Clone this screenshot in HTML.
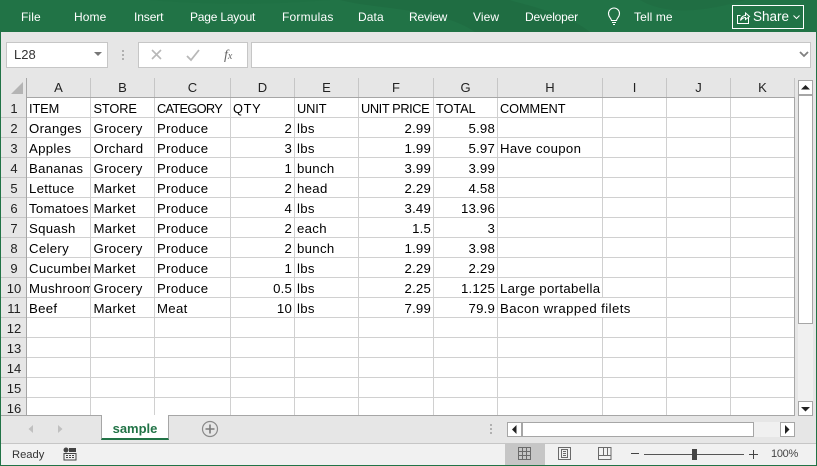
<!DOCTYPE html>
<html>
<head>
<meta charset="utf-8">
<style>
*{box-sizing:border-box}
html,body{margin:0;padding:0}
body{width:817px;height:466px;position:relative;overflow:hidden;background:#e6e6e6;font-family:"Liberation Sans",sans-serif;color:#000}
.a{position:absolute}
.t{position:absolute;top:9px;height:16px;line-height:16px;color:#fff;font-size:12px;letter-spacing:.1px;white-space:nowrap}
table{position:absolute;left:27px;top:98px;border-collapse:separate;border-spacing:0;table-layout:fixed;width:767px;background:#fff}
td{height:20px;padding:2px 2px 0;border-right:1px solid #d0d0d0;border-bottom:1px solid #d0d0d0;font-size:13.2px;letter-spacing:.32px;line-height:17px;white-space:nowrap;overflow:hidden;color:#000}
td:nth-child(2){padding-left:2.500px}
td.r{text-align:right;letter-spacing:.2px;padding-right:2px}
tr.h td{font-size:12.8px;letter-spacing:-.1px}
.ch{position:absolute;top:78px;height:19px;border-right:1px solid #c6c6c6;text-align:center;font-size:13px;line-height:20px;color:#222}
.rh{position:absolute;left:1px;width:25px;height:20px;border-bottom:1px solid #c6c6c6;text-align:center;font-size:13px;line-height:21px;padding-left:1px;color:#222}
</style>
</head>
<body>
<!-- frame -->
<div class="a" style="left:0;top:0;width:817px;height:32px;background:#217346"></div>
<svg class="a" style="left:0;top:0" width="817" height="32"><path d="M340 0C380 10 440 8 475 32L590 32C565 12 520 4 510 0Z" fill="#1f6b41" opacity=".75"/><path d="M640 0C660 12 690 14 730 4L745 0Z" fill="#1f6b41" opacity=".6"/><path d="M150 0C220 6 280 4 330 0Z" fill="#1f6e42" opacity=".4"/></svg>
<div class="t" style="left:21px">File</div>
<div class="t" style="left:74px">Home</div>
<div class="t" style="left:134px;letter-spacing:-.1px">Insert</div>
<div class="t" style="left:190px;letter-spacing:-.2px">Page Layout</div>
<div class="t" style="left:282px;letter-spacing:.2px">Formulas</div>
<div class="t" style="left:358px">Data</div>
<div class="t" style="left:409px;letter-spacing:-.2px">Review</div>
<div class="t" style="left:473px">View</div>
<div class="t" style="left:525px;letter-spacing:-.2px">Developer</div>
<div class="t" style="left:634px">Tell me</div>
<svg class="a" style="left:606px;top:7px" width="16" height="20" fill="none" stroke="#fff" stroke-width="1.1"><path d="M5.500 13.500C5 11 2.500 10 2.500 6.500A5.300 5.300 0 0 1 13.500 6.500C13.500 10 11 11 10.500 13.500Z"/><path d="M6 15.500H10M7 17.500H9"/></svg>
<div class="a" style="left:732px;top:5px;width:72px;height:24px;border:1px solid #fff"></div>
<svg class="a" style="left:736px;top:10px" width="15" height="15" fill="none" stroke="#fff" stroke-width="1"><path d="M4.500 5.500H1.500V13.500H12.500V7.500"/><path d="M4.500 10.500C5 7 7.500 5.500 9.500 5.500V3L13.500 6.500L9.500 9.500V7.500C7.500 7.500 6 8.500 4.500 10.500Z"/></svg>
<div class="t" style="left:753px;top:9px;font-size:13.5px;letter-spacing:0">Share</div>
<svg class="a" style="left:793px;top:15px" width="7" height="5" fill="none" stroke="#fff" stroke-width="1"><path d="M.5 .5L3.500 3.500L6.500 .5"/></svg>

<!-- formula bar -->
<div class="a" style="left:6px;top:42px;width:102px;height:26px;background:#fff;border:1px solid #c6c6c6"></div>
<div class="a" style="left:14px;top:47px;font-size:13px;line-height:16px;color:#333">L28</div>
<svg class="a" style="left:93px;top:51px" width="10" height="6"><path d="M1 1H9L5 5Z" fill="#777"/></svg>
<div class="a" style="left:122px;top:50px;width:2px;height:2px;background:#b0b0b0;box-shadow:0 4px 0 #b0b0b0,0 8px 0 #b0b0b0"></div>
<div class="a" style="left:138px;top:42px;width:110px;height:26px;background:#fff;border:1px solid #c6c6c6"></div>
<svg class="a" style="left:150px;top:47px" width="90" height="16" fill="none"><path d="M2 3L11 12M11 3L2 12" stroke="#b8b8b8" stroke-width="1.6"/><path d="M37 9L41 13L49 3" stroke="#b8b8b8" stroke-width="1.8"/><text x="74" y="12" font-family="Liberation Serif,serif" font-style="italic" font-size="14" fill="#666">f<tspan font-size="10">x</tspan></text></svg>
<div class="a" style="left:251px;top:42px;width:560px;height:26px;background:#fff;border:1px solid #c6c6c6"></div>
<svg class="a" style="left:799px;top:51px" width="10" height="7" fill="none"><path d="M1 1L5 5L9 1" stroke="#808080" stroke-width="1.8"/></svg>

<!-- column headers -->
<div class="a" style="left:1px;top:78px;width:794px;height:19px;background:#e6e6e6"></div>
<div class="a" style="left:26px;top:78px;width:1px;height:337px;background:#a6a6a6"></div>
<svg class="a" style="left:11px;top:82px" width="13" height="13"><path d="M12 0V12H0Z" fill="#b4b4b4"/></svg>
<div class="ch" style="left:27px;width:64px">A</div>
<div class="ch" style="left:91px;width:64px">B</div>
<div class="ch" style="left:155px;width:76px">C</div>
<div class="ch" style="left:231px;width:64px">D</div>
<div class="ch" style="left:295px;width:64px">E</div>
<div class="ch" style="left:359px;width:75px">F</div>
<div class="ch" style="left:434px;width:64px">G</div>
<div class="ch" style="left:498px;width:105px">H</div>
<div class="ch" style="left:603px;width:64px">I</div>
<div class="ch" style="left:667px;width:64px">J</div>
<div class="ch" style="left:731px;width:64px">K</div>
<div class="a" style="left:26px;top:97px;width:769px;height:1px;background:#a6a6a6"></div>

<!-- row headers -->
<div class="rh" style="top:98px">1</div>
<div class="rh" style="top:118px">2</div>
<div class="rh" style="top:138px">3</div>
<div class="rh" style="top:158px">4</div>
<div class="rh" style="top:178px">5</div>
<div class="rh" style="top:198px">6</div>
<div class="rh" style="top:218px">7</div>
<div class="rh" style="top:238px">8</div>
<div class="rh" style="top:258px">9</div>
<div class="rh" style="top:278px">10</div>
<div class="rh" style="top:298px">11</div>
<div class="rh" style="top:318px">12</div>
<div class="rh" style="top:338px">13</div>
<div class="rh" style="top:358px">14</div>
<div class="rh" style="top:378px">15</div>
<div class="rh" style="top:398px;height:17px;border-bottom:0">16</div>

<!-- grid -->
<div class="a" style="left:27px;top:98px;width:767px;height:317px;overflow:hidden;background:#fff">
<table style="left:0;top:0">
<colgroup><col style="width:64px"><col style="width:64px"><col style="width:76px"><col style="width:64px"><col style="width:64px"><col style="width:75px"><col style="width:64px"><col style="width:105px"><col style="width:64px"><col style="width:64px"><col style="width:64px"></colgroup>
<tr class="h"><td>ITEM</td><td>STORE</td><td style="letter-spacing:-.7px">CATEGORY</td><td style="letter-spacing:.7px">QTY</td><td>UNIT</td><td style="letter-spacing:-.4px">UNIT PRICE</td><td>TOTAL</td><td>COMMENT</td><td></td><td></td><td></td></tr>
<tr><td>Oranges</td><td>Grocery</td><td>Produce</td><td class="r">2</td><td>lbs</td><td class="r">2.99</td><td class="r">5.98</td><td></td><td></td><td></td><td></td></tr>
<tr><td>Apples</td><td>Orchard</td><td>Produce</td><td class="r">3</td><td>lbs</td><td class="r">1.99</td><td class="r">5.97</td><td>Have coupon</td><td></td><td></td><td></td></tr>
<tr><td>Bananas</td><td>Grocery</td><td>Produce</td><td class="r">1</td><td>bunch</td><td class="r">3.99</td><td class="r">3.99</td><td></td><td></td><td></td><td></td></tr>
<tr><td>Lettuce</td><td>Market</td><td>Produce</td><td class="r">2</td><td>head</td><td class="r">2.29</td><td class="r">4.58</td><td></td><td></td><td></td><td></td></tr>
<tr><td>Tomatoes</td><td>Market</td><td>Produce</td><td class="r">4</td><td>lbs</td><td class="r">3.49</td><td class="r">13.96</td><td></td><td></td><td></td><td></td></tr>
<tr><td>Squash</td><td>Market</td><td>Produce</td><td class="r">2</td><td>each</td><td class="r">1.5</td><td class="r">3</td><td></td><td></td><td></td><td></td></tr>
<tr><td>Celery</td><td>Grocery</td><td>Produce</td><td class="r">2</td><td>bunch</td><td class="r">1.99</td><td class="r">3.98</td><td></td><td></td><td></td><td></td></tr>
<tr><td>Cucumber</td><td>Market</td><td>Produce</td><td class="r">1</td><td>lbs</td><td class="r">2.29</td><td class="r">2.29</td><td></td><td></td><td></td><td></td></tr>
<tr><td>Mushroom</td><td>Grocery</td><td>Produce</td><td class="r">0.5</td><td>lbs</td><td class="r">2.25</td><td class="r">1.125</td><td>Large portabella</td><td></td><td></td><td></td></tr>
<tr><td>Beef</td><td>Market</td><td>Meat</td><td class="r">10</td><td>lbs</td><td class="r">7.99</td><td class="r">79.9</td><td colspan="2" style="letter-spacing:.42px">Bacon wrapped filets</td><td></td><td></td></tr>
<tr><td></td><td></td><td></td><td></td><td></td><td></td><td></td><td></td><td></td><td></td><td></td></tr>
<tr><td></td><td></td><td></td><td></td><td></td><td></td><td></td><td></td><td></td><td></td><td></td></tr>
<tr><td></td><td></td><td></td><td></td><td></td><td></td><td></td><td></td><td></td><td></td><td></td></tr>
<tr><td></td><td></td><td></td><td></td><td></td><td></td><td></td><td></td><td></td><td></td><td></td></tr>
<tr><td></td><td></td><td></td><td></td><td></td><td></td><td></td><td></td><td></td><td></td><td></td></tr>
</table>
</div>
<div class="a" style="left:794px;top:97px;width:1px;height:319px;background:#a6a6a6"></div>
<div class="a" style="left:1px;top:415px;width:794px;height:1px;background:#a6a6a6"></div>

<!-- vertical scrollbar -->
<div class="a" style="left:795px;top:78px;width:21px;height:338px;background:#e6e6e6"></div>
<div class="a" style="left:798px;top:95px;width:15px;height:306px;background:#f0f0f0"></div>
<div class="a" style="left:798px;top:80px;width:15px;height:15px;background:#fff;border:1px solid #a6a6a6"></div>
<svg class="a" style="left:801px;top:85px" width="9" height="5"><path d="M0 4.500H9L4.500 0Z" fill="#222"/></svg>
<div class="a" style="left:798px;top:95px;width:15px;height:229px;background:#fff;border:1px solid #a6a6a6"></div>
<div class="a" style="left:798px;top:401px;width:15px;height:15px;background:#fff;border:1px solid #a6a6a6"></div>
<svg class="a" style="left:801px;top:407px" width="9" height="5"><path d="M0 0H9L4.500 4.500Z" fill="#222"/></svg>

<!-- sheet tabs -->
<div class="a" style="left:1px;top:416px;width:815px;height:27px;background:#e6e6e6"></div>
<svg class="a" style="left:27px;top:424px" width="36" height="10"><path d="M6 1V9L1.500 5Z" fill="#c0c0c0"/><path d="M31 1V9L35.500 5Z" fill="#c0c0c0"/></svg>
<div class="a" style="left:101px;top:415px;width:68px;height:25px;background:#fff;border-left:1px solid #a6a6a6;border-right:1px solid #a6a6a6;border-bottom:2px solid #217346"></div>
<div class="a" style="left:101px;top:420px;width:68px;text-align:center;font-size:13px;font-weight:bold;color:#217346;line-height:17px">sample</div>
<svg class="a" style="left:201px;top:420px" width="18" height="18" fill="none"><circle cx="9" cy="9" r="7.500" stroke="#8a8a8a" stroke-width="1.200"/><path d="M9 4.500V13.500M4.500 9H13.500" stroke="#7a7a7a" stroke-width="1.600"/></svg>
<div class="a" style="left:490px;top:424px;width:2px;height:2px;background:#b0b0b0;box-shadow:0 4px 0 #b0b0b0,0 8px 0 #b0b0b0"></div>
<div class="a" style="left:507px;top:422px;width:288px;height:15px;background:#f0f0f0"></div>
<div class="a" style="left:507px;top:422px;width:15px;height:15px;background:#fff;border:1px solid #a6a6a6"></div>
<svg class="a" style="left:512px;top:425px" width="5" height="9"><path d="M4.500 0V9L0 4.500Z" fill="#222"/></svg>
<div class="a" style="left:522px;top:422px;width:232px;height:15px;background:#fff;border:1px solid #a6a6a6"></div>
<div class="a" style="left:780px;top:422px;width:15px;height:15px;background:#fff;border:1px solid #a6a6a6"></div>
<svg class="a" style="left:785px;top:425px" width="5" height="9"><path d="M0 0V9L4.500 4.500Z" fill="#222"/></svg>

<!-- status bar -->
<div class="a" style="left:1px;top:443px;width:815px;height:1px;background:#c6c6c6"></div>
<div class="a" style="left:1px;top:444px;width:815px;height:21px;background:#f1f1f1"></div>
<div class="a" style="left:12px;top:447px;font-size:11.200px;line-height:17px;letter-spacing:0;color:#333">Ready</div>
<svg class="a" style="left:63px;top:447px" width="14" height="14"><circle cx="3" cy="3" r="2.500" fill="#444"/><path d="M6 1H13V5H6Z" fill="#444"/><path d="M1 6.500H13V13H1Z" fill="none" stroke="#444"/><path d="M3 8.500H5M6 8.500H8M9 8.500H11M3 10.500H5M6 10.500H8M9 10.500H11" stroke="#444"/></svg>
<div class="a" style="left:505px;top:444px;width:40px;height:21px;background:#c6c6c6"></div>
<svg class="a" style="left:518px;top:447px" width="14" height="14" fill="none" stroke="#6a6a6a"><path d="M.5 .5H12.500V12.500H.5ZM.5 4.500H12.500M.5 8.500H12.500M4.500 .5V12.500M8.500 .5V12.500"/></svg>
<svg class="a" style="left:558px;top:447px" width="14" height="14" fill="none" stroke="#6a6a6a"><path d="M.5 .5H12.500V12.500H.5ZM3.500 2.500H9.500V10.500H3.500ZM5 4.500H8M5 6.500H8M5 8.500H8"/></svg>
<svg class="a" style="left:598px;top:447px" width="14" height="14" fill="none" stroke="#6a6a6a"><path d="M.5 .5H13V12.500H.5ZM.5 8.500H13M5.500 .5V8.500M9.500 .5V8.500"/></svg>
<div class="a" style="left:631px;top:453px;width:8px;height:1px;background:#444"></div>
<div class="a" style="left:644px;top:454px;width:100px;height:1px;background:#555"></div>
<div class="a" style="left:692px;top:449px;width:5px;height:11px;background:#444"></div>
<svg class="a" style="left:748px;top:449px" width="11" height="11" fill="none" stroke="#444"><path d="M1 5.500H10M5.500 1V10"/></svg>
<div class="a" style="left:771px;top:446px;font-size:11px;line-height:16px;letter-spacing:-.3px;color:#444">100%</div>

<!-- green window border -->
<div class="a" style="left:0;top:0;width:1px;height:466px;background:#217346"></div>
<div class="a" style="left:816px;top:0;width:1px;height:466px;background:#217346"></div>
<div class="a" style="left:0;top:465px;width:817px;height:1px;background:#217346"></div>
</body>
</html>
